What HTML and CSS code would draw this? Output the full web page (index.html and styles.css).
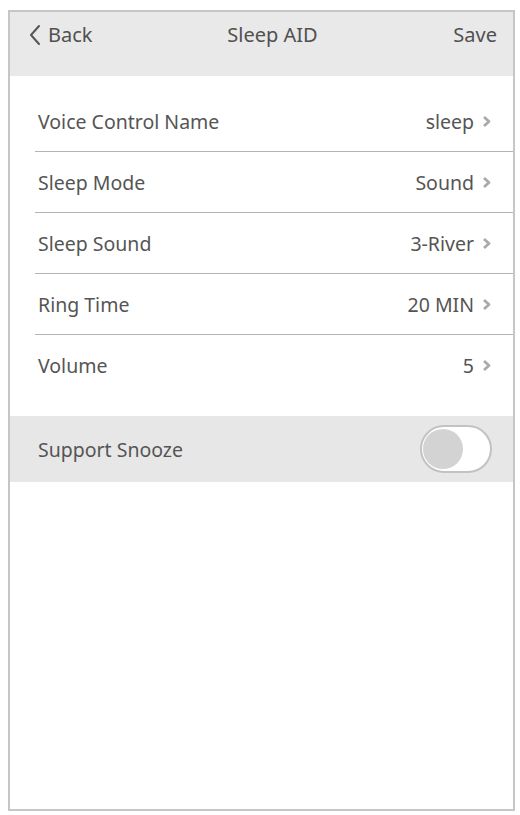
FILE: index.html
```html
<!DOCTYPE html>
<html lang="en">
<head>
    <meta charset="UTF-8">
    <meta name="viewport" content="width=device-width, initial-scale=1.0">
    <title>Sleep AID</title>
    <link rel="stylesheet" href="styles.css">
</head>
<body>
    <div class="phone">
        <div class="header">
            <div class="back">
                <svg class="back-icon" width="14" height="22" viewBox="0 0 14 22">
                    <polyline points="11,2 3,11 11,20" fill="none" stroke="#555" stroke-width="2" stroke-linecap="round" stroke-linejoin="round"/>
                </svg>
                <span>Back</span>
            </div>
            <div class="title">Sleep AID</div>
            <div class="save">Save</div>
        </div>

        <div class="list">
            <div class="row">
                <span class="label">Voice Control Name</span>
                <span class="value">sleep <svg class="chev" width="9" height="13" viewBox="0 0 9 13"><polyline points="2,2 7,6.5 2,11" fill="none" stroke="#aaa" stroke-width="2.8" stroke-linejoin="round"/></svg></span>
            </div>
            <div class="row">
                <span class="label">Sleep Mode</span>
                <span class="value">Sound <svg class="chev" width="9" height="13" viewBox="0 0 9 13"><polyline points="2,2 7,6.5 2,11" fill="none" stroke="#aaa" stroke-width="2.8" stroke-linejoin="round"/></svg></span>
            </div>
            <div class="row">
                <span class="label">Sleep Sound</span>
                <span class="value">3-River <svg class="chev" width="9" height="13" viewBox="0 0 9 13"><polyline points="2,2 7,6.5 2,11" fill="none" stroke="#aaa" stroke-width="2.8" stroke-linejoin="round"/></svg></span>
            </div>
            <div class="row">
                <span class="label">Ring Time</span>
                <span class="value">20 MIN <svg class="chev" width="9" height="13" viewBox="0 0 9 13"><polyline points="2,2 7,6.5 2,11" fill="none" stroke="#aaa" stroke-width="2.8" stroke-linejoin="round"/></svg></span>
            </div>
            <div class="row">
                <span class="label">Volume</span>
                <span class="value">5 <svg class="chev" width="9" height="13" viewBox="0 0 9 13"><polyline points="2,2 7,6.5 2,11" fill="none" stroke="#aaa" stroke-width="2.8" stroke-linejoin="round"/></svg></span>
            </div>
        </div>

        <div class="snooze">
            <span class="label">Support Snooze</span>
            <div class="toggle"><div class="knob"></div></div>
        </div>
    </div>
</body>
</html>
```

FILE: styles.css
```css
body {
    margin: 0;
    padding: 0;
    background: #ffffff;
    font-family: 'Noto Sans', 'Open Sans', sans-serif;
    color: #555;
}

.phone {
    margin: 10px 5px 0 8px;
    height: 801px;
    border: 2px solid #c6c6c6;
    box-sizing: border-box;
    background: #ffffff;
}

.header {
    height: 64px;
    background: #e9e9e9;
    display: flex;
    justify-content: space-between;
    align-items: flex-start;
    padding: 9px 16px 0 18px;
    box-sizing: border-box;
    font-size: 20px;
    line-height: 28px;
    color: #505050;
}

.back {
    display: flex;
    align-items: center;
    gap: 6px;
    width: 90px;
}

.back-icon {
    display: block;
}

.title {
    flex: 1;
    text-align: center;
    padding-left: 20px;
}

.save {
    width: 90px;
    text-align: right;
}

.list {
    padding: 15px 0 21px 25px;
}

.row {
    height: 60px;
    display: flex;
    justify-content: space-between;
    align-items: center;
    padding: 0 22px 0 3px;
    border-bottom: 1px solid #b4b4b4;
    font-size: 19.5px;
}

.row:last-child {
    border-bottom: none;
}

.value {
    display: flex;
    align-items: center;
    gap: 8px;
}

.chev {
    display: block;
}

.snooze {
    height: 66px;
    background: #e7e7e7;
    display: flex;
    justify-content: space-between;
    align-items: center;
    padding: 0 21px 0 28px;
    font-size: 19.5px;
}

.toggle {
    width: 72px;
    height: 48px;
    box-sizing: border-box;
    border: 2px solid #c2c2c2;
    border-radius: 24px;
    background: #ffffff;
    display: flex;
    align-items: center;
    padding-left: 1px;
}

.knob {
    width: 40px;
    height: 40px;
    border-radius: 50%;
    background: #d3d3d3;
}
```
